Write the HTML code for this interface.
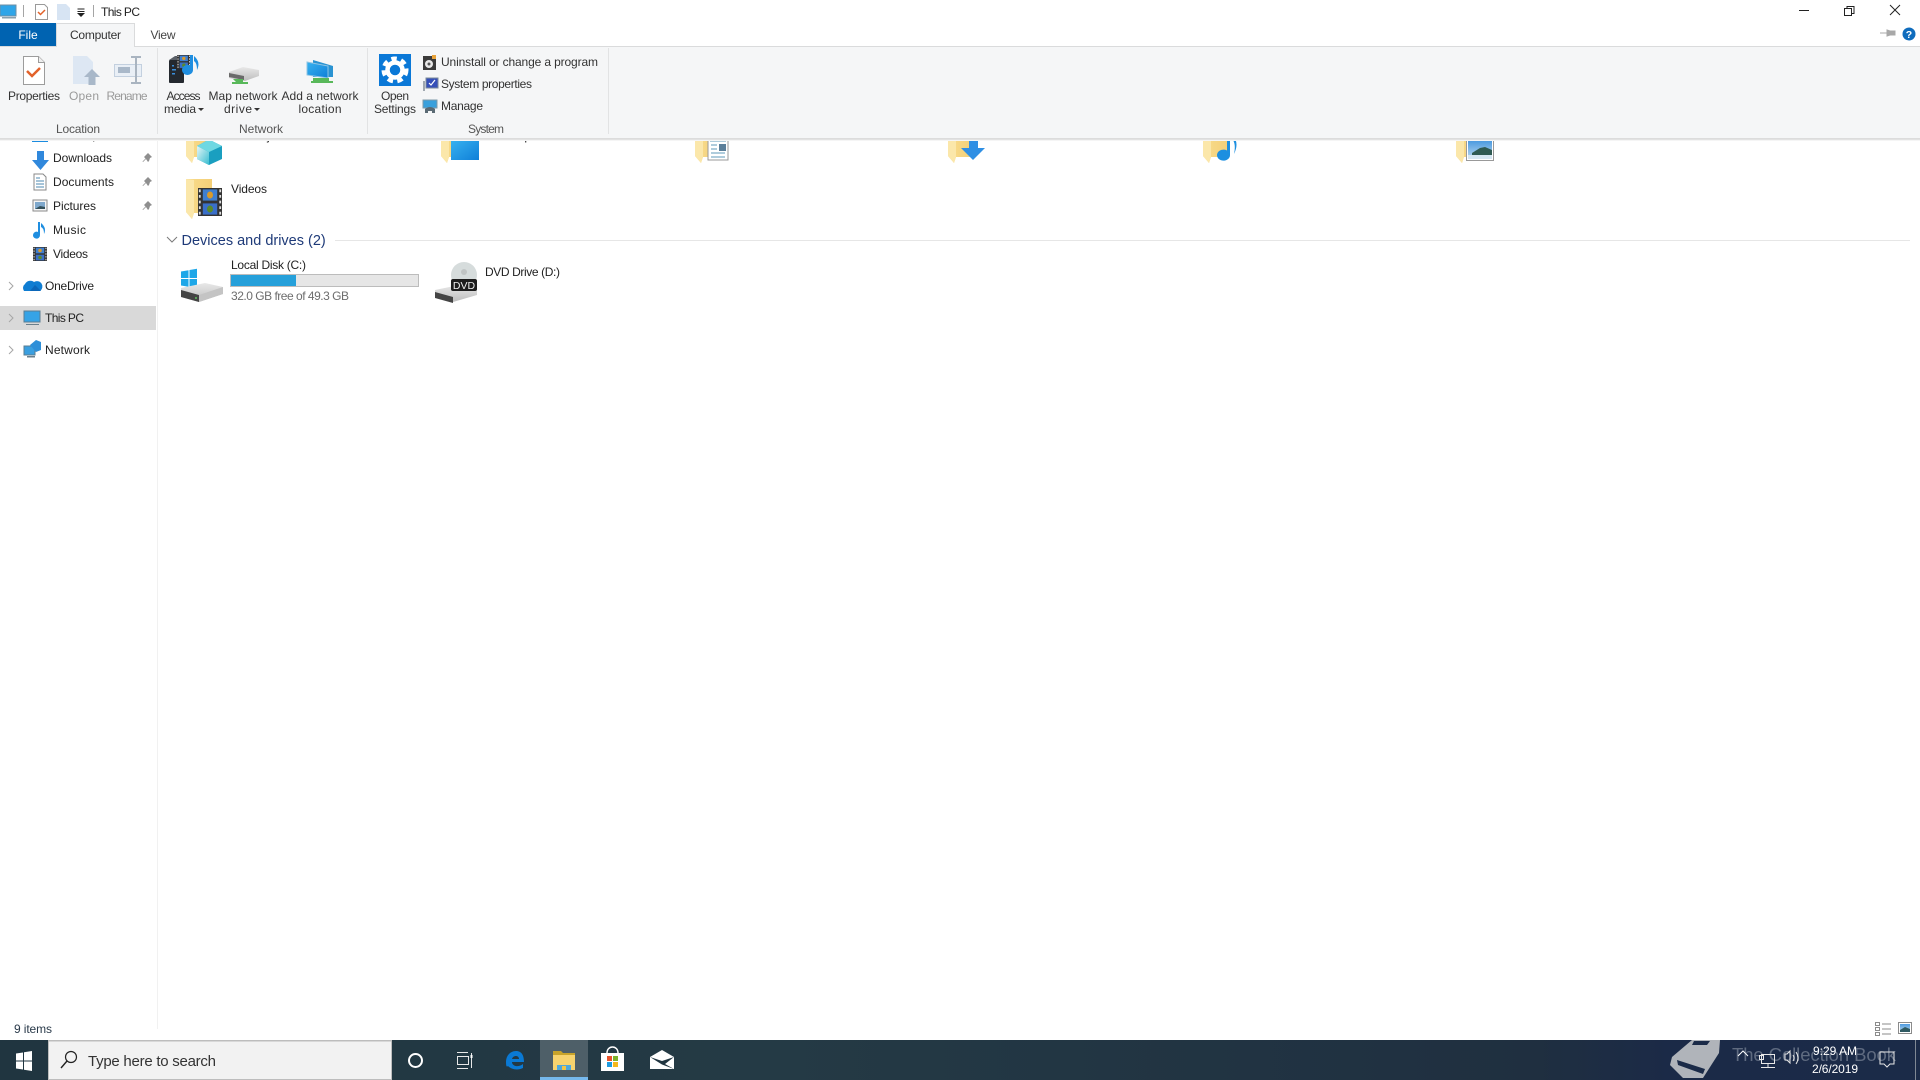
<!DOCTYPE html>
<html><head><meta charset="utf-8"><title>This PC</title>
<style>
html,body{margin:0;padding:0;background:#fff;width:1920px;height:1080px;overflow:hidden}
svg{display:block;position:absolute;left:0;top:0}
text{font-family:"Liberation Sans",sans-serif;font-size:12px;fill:#222}
.g{fill:#9a9a9a}.l{fill:#555}.m{text-anchor:middle}
</style></head><body>
<svg width="1920" height="1080" viewBox="0 0 1920 1080">
<defs>
<linearGradient id="tb" x1="0" x2="1" y1="0" y2="0">
<stop offset="0" stop-color="#203540"/><stop offset=".4" stop-color="#243a45"/><stop offset=".8" stop-color="#1f2f40"/><stop offset=".87" stop-color="#1b2a47"/><stop offset="1" stop-color="#1b2b48"/></linearGradient>
<linearGradient id="sh" x1="0" x2="0" y1="0" y2="1"><stop offset="0" stop-color="#d8d8d8"/><stop offset="1" stop-color="#fff"/></linearGradient>
<linearGradient id="fo" x1="0" x2="1" y1="0" y2="0"><stop offset="0" stop-color="#f9dc8c"/><stop offset="1" stop-color="#f3cf78"/></linearGradient>
<linearGradient id="cube" x1="0" x2="1" y1="0" y2="1"><stop offset="0" stop-color="#e6f6f7"/><stop offset="1" stop-color="#38bdd0"/></linearGradient>
<linearGradient id="hdd" x1="0" x2="0" y1="0" y2="1"><stop offset="0" stop-color="#e8e8e8"/><stop offset="1" stop-color="#bdbdbd"/></linearGradient>
<linearGradient id="scr" x1="0" x2="1" y1="0" y2="1"><stop offset="0" stop-color="#37b2f0"/><stop offset="1" stop-color="#0f7fd8"/></linearGradient>
<linearGradient id="sky" x1="0" x2="0" y1="0" y2="1"><stop offset="0" stop-color="#4d9be0"/><stop offset="1" stop-color="#bcd9ee"/></linearGradient>
<clipPath id="below"><rect x="0" y="139" width="1920" height="900"/></clipPath>
<g id="folder"><path d="M0 0H26V34H8L6 40 0 33Z" fill="url(#fo)"/><path d="M8 1V34L6 40 0 33V0Z" fill="#fbe7aa"/></g>
<g id="film"><rect width="20" height="20" fill="#333"/><rect x="4" y="1" width="12" height="8" fill="#3f7fd0"/><rect x="4" y="11" width="12" height="8" fill="#3a6fc8"/><circle cx="10" cy="5" r="2.500" fill="#d99a2a"/><circle cx="10" cy="15" r="2.500" fill="#5b8a2a"/><path d="M1.500 1v18M18.500 1v18" stroke="#ddd" stroke-dasharray="2 2" stroke-width="1.500"/></g>
</defs>

<!-- page -->
<rect width="1920" height="1080" fill="#fff"/>
<rect x="157" y="139" width="1" height="890" fill="#f1f1f1"/>

<!-- clipped content behind ribbon -->
<g clip-path="url(#below)">
<text x="53" y="139" textLength="46">Desktop</text>
<text x="231" y="140" textLength="62">3D Objects</text>
<text x="485" y="140" textLength="46">Desktop</text>
<rect x="32" y="134" width="16" height="8" fill="#1b8ce0"/>

<!-- row 1 folders -->
<use href="#folder" x="186" y="123"/>
<path d="M209 139.500 222 146V159L209 165 197 159V146Z" fill="#1a9fc0"/>
<path d="M197 146 209 139.500 222 146 209 152Z" fill="#6fd8e2"/><path d="M197 146 209 152V165L197 159Z" fill="url(#cube)"/>
<use href="#folder" x="441" y="123"/><rect x="451" y="140" width="28" height="20" fill="url(#scr)"/>
<use href="#folder" x="695" y="123"/><rect x="708" y="138" width="20" height="22" fill="#fff" stroke="#999"/><path d="M710 141h16M711 145h6M711 149h6M711 153h14M711 157h14" stroke="#5f9ab8"/><rect x="719" y="144" width="7" height="7" fill="#5b7f9a"/>
<use href="#folder" x="948" y="123"/><path d="M969 138h9v10h7l-12 12-12-12h8z" fill="#2f8fe4"/>
<use href="#folder" x="1203" y="123"/><path d="M1230 138v17a6.500 5.500 0 1 1-3-4.500V138z" fill="#1c8fe0"/><path d="M1234 137q5 7 0 17q2-9-1-14z" fill="#1c8fe0"/>
<use href="#folder" x="1456" y="123"/><rect x="1466.500" y="139.500" width="27" height="21" fill="#fff" stroke="#999"/><rect x="1468" y="141" width="24" height="18" fill="url(#sky)"/><path d="M1472 153l8-5 5-1 7 3v6h-20z" fill="#2f5a52"/><rect x="1468" y="155" width="24" height="4" fill="#d5e6f2"/>
</g>
<!-- Videos folder -->
<use href="#folder" x="186" y="179"/>
<use href="#film" transform="translate(198,188) scale(1.2,1.4)"/>
<text x="231" y="193" textLength="36">Videos</text>

<!-- nav -->
<path d="M37 151h7v9h5l-8.500 10-8.500-10h5z" fill="#3088dc"/>
<text x="53" y="162" textLength="59">Downloads</text>
<path d="M34 174h9l3 3v13H34z" fill="#fff" stroke="#888"/><path d="M36 178h4M36 181h8M36 184h8M36 187h8" stroke="#4d88b0"/>
<text x="53" y="186" textLength="61">Documents</text>
<rect x="33" y="200" width="14" height="11" fill="#f5f5f5" stroke="#8a8a8a"/><rect x="35" y="202" width="10" height="7" fill="#7fa8cc"/><path d="M35 209l5-3 5 1v2z" fill="#34505a"/>
<text x="53" y="210" textLength="43">Pictures</text>
<path d="M40 222v13a3.500 3.500 0 1 1-2-3v-10zM41 223q6 5 3 11q0-6-3-7z" fill="#1f8ee0"/>
<text x="53" y="234" textLength="33">Music</text>
<use href="#film" transform="translate(33,247) scale(.7)"/>
<text x="53" y="258" textLength="35">Videos</text>
<g fill="#8f8f8f"><path d="M144 158l4-4 4 4-2 1-1 3-1 1-2-3-3 3-.5-.5 3-3z" transform="translate(0,-1)"/><path d="M144 182l4-4 4 4-2 1-1 3-1 1-2-3-3 3-.5-.5 3-3z" transform="translate(0,-1)"/><path d="M144 206l4-4 4 4-2 1-1 3-1 1-2-3-3 3-.5-.5 3-3z" transform="translate(0,-1)"/></g>

<rect x="0" y="306" width="156" height="24" fill="#d9d9d9"/>
<g fill="none" stroke="#a6a6a6"><path d="M9 282l4 4-4 4M9 314l4 4-4 4M9 346l4 4-4 4"/></g>
<path d="M24 291a5 5 0 0 1 1-7 6 6 0 0 1 9-2 5 5 0 0 1 6 9z" fill="#0f7dd2"/><path d="M30 291l5-6 6 6z" fill="#0b66b8"/>
<text x="45" y="290" textLength="49">OneDrive</text>
<rect x="24" y="311" width="16" height="11" fill="#35a3e6" stroke="#5a7d92"/><rect x="26" y="324" width="13" height="1" fill="#6a7f8c"/>
<text x="45" y="322" textLength="39">This PC</text>
<rect x="24" y="346" width="11" height="9" fill="#3a9fe0" stroke="#5a7d92"/><path d="M30 345l6-5 5 2v8l-5 2z" fill="#2e8fd8"/><rect x="27" y="356" width="8" height="1.500" fill="#6a7f8c"/>
<text x="45" y="354" textLength="45">Network</text>

<!-- devices and drives -->
<path d="M167 237l5 5 5-5" fill="none" stroke="#7a7a7a"/>
<text x="181.500" y="245" style="font-size:14.500px;fill:#1e3a78">Devices and drives (2)</text>
<rect x="335" y="240" width="1575" height="1" fill="#e6e6e6"/>

<!-- C: -->
<g fill="#1ea7e8"><path d="M181 271.500l7.500-1.300v7.800h-7.500zM189.500 270l7.500-1.300v9.300h-7.500zM181 279h7.500v7.800l-7.500-1.300zM189.500 279h7.500v9l-7.500-1.300z"/></g>
<path d="M181 288l24-5 18 4v7l-24 8-18-5z" fill="url(#hdd)"/><path d="M181 290l18 5v7l-18-5z" fill="#444"/><path d="M199 295l24-8v7l-24 8z" fill="#c4c4c4"/><circle cx="196" cy="298" r="1" fill="#5fc15f"/>
<text x="231" y="269" textLength="75">Local Disk (C:)</text>
<rect x="230.500" y="274.500" width="188" height="12" fill="#e6e6e6" stroke="#bcbcbc"/>
<rect x="231" y="275" width="65" height="11" fill="#26a0da"/>
<text x="231" y="300" style="fill:#6d6d6d" textLength="118">32.0 GB free of 49.3 GB</text>

<!-- D: -->
<circle cx="464" cy="275" r="13" fill="#d6dcdc"/><circle cx="464" cy="272" r="3" fill="#c0c4c4"/>
<path d="M435 290l24-5 18 4v6l-24 7-18-5z" fill="url(#hdd)"/><path d="M435 292l18 5v6l-18-5z" fill="#444"/>
<rect x="451" y="279" width="26" height="12" rx="2" fill="#1d1d1d"/>
<text x="464" y="289" class="m" style="font-size:10.500px;fill:#eee">DVD</text>
<text x="485" y="276" textLength="75">DVD Drive (D:)</text>

<!-- titlebar -->
<rect x="0" y="5" width="16" height="11" fill="#2fa5e8" stroke="#6d8ea3"/><rect x="2" y="17" width="14" height="1.500" fill="#8aa0ae"/>
<rect x="23" y="5" width="1" height="12" fill="#a5a5a5"/>
<path d="M35.500 4.500h9l3 3v12h-12z" fill="#fff" stroke="#9a9a9a"/><path d="M38 12l2.500 2.500 4.500-4.500" fill="none" stroke="#e2622a" stroke-width="1.500"/>
<path d="M57 4h9l4 4v12H57z" fill="#d7e4f3"/>
<path d="M77.500 9h7M77.500 11.500h7" stroke="#222" stroke-width="1"/><path d="M77 13h8l-4 4z" fill="#222"/>
<rect x="93" y="5" width="1" height="12" fill="#a5a5a5"/>
<text x="101" y="16" textLength="39">This PC</text>
<rect x="1799" y="10" width="10" height="1" fill="#222"/>
<g fill="none" stroke="#222"><rect x="1844.500" y="8.500" width="7" height="7"/><path d="M1847 8.500V6.500h7v7h-2"/><path d="M1890 5l10 10M1900 5l-10 10"/></g>

<!-- tabs & ribbon -->
<rect x="0" y="46" width="1920" height="92" fill="#f5f6f7"/>
<rect x="0" y="46" width="1920" height="1" fill="#dadbdc"/>
<rect x="0" y="138" width="1920" height="1" fill="#dcdcdc"/>
<rect x="0" y="139" width="1920" height="2" fill="url(#sh)"/>
<rect x="0" y="23" width="56" height="23" fill="#0063b1"/>
<text x="28" y="39" class="m" style="fill:#fff">File</text>
<path d="M56.500 47V23.500h78V47" fill="#f5f6f7" stroke="#dadbdc"/>
<rect x="57" y="45" width="77" height="3" fill="#f5f6f7"/>
<text x="95.500" y="39" class="m" style="fill:#333" textLength="51">Computer</text>
<text x="163" y="39" class="m" style="fill:#444" textLength="25">View</text>
<path d="M1880 33h7M1887 30v6l3-1h5v-4h-5z" fill="#a8a8a8" stroke="#a8a8a8"/>
<circle cx="1909" cy="34" r="6.500" fill="#0f6cbd"/><text x="1909" y="38" class="m" style="font-size:10.500px;font-weight:bold;fill:#fff">?</text>

<g fill="#e2e3e4"><rect x="157" y="48" width="1" height="86"/><rect x="367" y="48" width="1" height="86"/><rect x="608" y="48" width="1" height="86"/></g>

<!-- properties -->
<path d="M23.500 56.500h15l6 6v22h-21z" fill="#fff" stroke="#9c9c9c"/><path d="M38.500 56.500v6h6" fill="#eee" stroke="#9c9c9c"/>
<path d="M27 71l5 5 8-8" fill="none" stroke="#e2622a" stroke-width="2.500"/>
<text x="34" y="100" class="m" style="fill:#333" textLength="52">Properties</text>
<!-- open -->
<path d="M73 56h14l6 6v22H73z" fill="#dde7f3"/><path d="M92 69l8 8h-4.500v8h-7v-8H84z" fill="#a9b8c9"/>
<text x="84" y="100" class="m g" textLength="30">Open</text>
<!-- rename -->
<rect x="114.500" y="64.500" width="27" height="12" fill="#e9eff6" stroke="#c3d0df"/><rect x="118" y="67" width="12" height="6" fill="#a9b8c9"/>
<path d="M131 57h10M136 57v26M131 83h10" stroke="#a9b4c0" stroke-width="2" fill="none"/>
<text x="127" y="100" class="m g" textLength="41">Rename</text>
<!-- access media -->
<rect x="169" y="60" width="15" height="23" rx="1" fill="#24292f"/><path d="M169 60l6-4h9v4z" fill="#5a6068"/><g fill="#3a8fdc"><rect x="172" y="65" width="2" height="1.500"/><rect x="172" y="69" width="4" height="1.500"/><rect x="172" y="73" width="3" height="1.500"/></g>
<use href="#film" transform="translate(177,55) scale(.68)"/>
<path d="M193 55v15a5.500 5 0 1 1-3-4.500V55zM194 56q7 6 3 14q0-7-3-9z" fill="#1f8ee0"/>
<text x="183.500" y="100" class="m" style="fill:#333" textLength="34">Access</text>
<text x="180" y="113" class="m" style="fill:#333" textLength="32">media</text>
<path d="M198 108h6l-3 3z" fill="#333"/>
<!-- map -->
<path d="M229 72l14-5 16 3v6l-14 5-16-3z" fill="url(#hdd)"/><path d="M229 73l15 3v4l-15-3z" fill="#6a6a6a"/><path d="M233 79h10v3h5v2h-16v-2h4z" fill="#58b85a"/>
<text x="243" y="100" class="m" style="fill:#333" textLength="69">Map network</text>
<text x="238" y="113" class="m" style="fill:#333" textLength="28">drive</text>
<path d="M254 108h6l-3 3z" fill="#333"/>
<!-- add net -->
<path d="M313 60l20 6v11h-20z" fill="#2a93d2"/><path d="M307 62l21 4v12l-21-3z" fill="url(#scr)" stroke="#8fc5e4"/><path d="M313 78h16v3h4v2h-22v-2h2z" fill="#58b85a"/>
<text x="320" y="100" class="m" style="fill:#333" textLength="77">Add a network</text>
<text x="320" y="113" class="m" style="fill:#333" textLength="43">location</text>
<!-- settings -->
<rect x="379" y="54" width="32" height="32" fill="#0a78d7"/>
<circle cx="395" cy="70" r="7.500" fill="none" stroke="#fff" stroke-width="4.500"/>
<circle cx="395" cy="70" r="11.500" fill="none" stroke="#fff" stroke-width="4" stroke-dasharray="5.500 4.530"/>
<text x="395" y="100" class="m" style="fill:#333" textLength="28">Open</text>
<text x="395" y="113" class="m" style="fill:#333" textLength="42">Settings</text>
<!-- sys list -->
<rect x="423" y="56" width="13" height="14" fill="#3a3a3a"/><circle cx="429" cy="64" r="4" fill="#e8e8e8"/><circle cx="429" cy="64" r="1.500" fill="#555"/><rect x="432" y="55" width="4" height="4" fill="#e8a33a"/>
<text x="441" y="66" style="fill:#333" textLength="157">Uninstall or change a program</text>
<rect x="426" y="78" width="12" height="10" fill="#3650b8" stroke="#7a8a9a"/><path d="M429 83l2 2 4-5" fill="none" stroke="#fff" stroke-width="1.200"/><rect x="423" y="81" width="2" height="10" fill="#a0a8b0"/>
<text x="441" y="88" style="fill:#333" textLength="91">System properties</text>
<rect x="423" y="100" width="14" height="8" fill="#3aa0dc" stroke="#7f9aaa"/><path d="M425 113v-4q5-4 10 0v4h-3v-2h-4v2z" fill="#5a6a74"/>
<text x="441" y="110" style="fill:#333" textLength="42">Manage</text>
<g class="l"><text x="78" y="133" class="m l" textLength="44">Location</text><text x="261" y="133" class="m l" textLength="44">Network</text><text x="486" y="133" class="m l" textLength="36">System</text></g>

<!-- status bar -->
<text x="14" y="1033" style="fill:#2a3a4a" textLength="38">9 items</text>
<g fill="none" stroke="#8b8b8b"><rect x="1875.500" y="1022.500" width="4" height="3"/><rect x="1875.500" y="1027.500" width="4" height="3"/><rect x="1875.500" y="1032.500" width="4" height="3"/><path d="M1882 1024h9M1882 1029h9M1882 1034h9"/><rect x="1898.500" y="1022.500" width="13" height="11" fill="#fff"/></g>
<rect x="1900" y="1024" width="10" height="8" fill="url(#sky)"/><path d="M1900 1030l5-3 5 2v3h-10z" fill="#2f5a62"/>

<!-- taskbar -->
<rect x="0" y="1040" width="1920" height="40" fill="url(#tb)"/>
<g fill="#fff"><path d="M16 1053.500l7-1v8h-7zM24 1052.300l8-1.300v9.500h-8zM16 1061.500h7v8l-7-1zM24 1061.500h8V1071l-8-1.200z"/></g>
<rect x="48" y="1040" width="344" height="40" fill="#f2f2f2"/><rect x="48" y="1040" width="344" height="1.500" fill="#bdbdbd"/><rect x="48" y="1040" width="1" height="40" fill="#bdbdbd"/><rect x="391" y="1040" width="1" height="40" fill="#bdbdbd"/><rect x="48" y="1079" width="344" height="1" fill="#bdbdbd"/>
<circle cx="71" cy="1057" r="5.500" fill="none" stroke="#222" stroke-width="1.200"/><path d="M67 1061l-6 7" stroke="#222" stroke-width="1.400"/>
<text x="88" y="1066" style="font-size:15px;fill:#333" textLength="128">Type here to search</text>
<circle cx="415.500" cy="1060.500" r="6.500" fill="none" stroke="#fff" stroke-width="2"/>
<g fill="none" stroke="#e8e8e8"><rect x="457.500" y="1056.500" width="11" height="8"/><path d="M457 1052.500h11M457 1068.500h11M471.500 1053v15"/><path d="M471.500 1055v3" stroke="#fff" stroke-width="2"/></g>
<path d="M506 1062c0-7 5-11 10-11 6 0 8 5 8 11h-12c0 4 6 6 11 2v4c-6 3-12 1-15-2-1 1-2 1-2-4zm6-3h7c0-4-6-4-7 0z" fill="#0a79d4" fill-rule="evenodd"/>
<rect x="540" y="1040" width="48" height="40" fill="#4e5f68"/><rect x="540" y="1077" width="48" height="3" fill="#76b9ed"/>
<path d="M553 1051h8l2 2h12v4h-22z" fill="#c8a32a"/><rect x="553" y="1055" width="22" height="15" fill="#f7d36e"/><path d="M557 1070v-5h14v5z" fill="#4fa8dc"/><rect x="562" y="1066" width="4" height="4" fill="#f2c544"/>
<path d="M601 1053h23v18h-23z" fill="#fff"/><path d="M607 1053c0-8 11-8 11 0" fill="none" stroke="#fff" stroke-width="1.500"/>
<rect x="607" y="1056" width="5" height="5" fill="#e8532b"/><rect x="613" y="1056" width="5" height="5" fill="#7db32c"/><rect x="607" y="1062" width="5" height="5" fill="#1e9be0"/><rect x="613" y="1062" width="5" height="5" fill="#f5b81c"/>
<path d="M650 1057l12-7 12 7v12h-24z" fill="#fff"/><path d="M650 1057l12 4 12-4-9 7 9 5-12-4.500z" fill="#203540" transform="translate(0,0)"/>

<!-- tray + watermark -->
<path d="M1692 1040h28l-1 13-16 25h-20l-13-13 2-8z" fill="#b0b4ba"/>
<path d="M1694 1041h16l-3 4h-15zM1677 1060l28 9-2 5-25-9z" fill="#1b2b48"/>
<text x="1732" y="1061" style="font-size:18.500px;fill:#5f6b80" textLength="164">The Collection Book</text>
<path d="M1738 1056l5-5 5 5" fill="none" stroke="#fff"/>
<g fill="none" stroke="#e8e8e8"><rect x="1761.500" y="1054.500" width="13" height="9"/><rect x="1759.500" y="1055.500" width="4" height="4"/><path d="M1768 1064v4M1761 1067.500h14"/><path d="M1785 1054h2l3-3v12l-3-3h-2zM1793 1055q2 3 0 6M1796 1052q4 6 0 12"/><path d="M1880 1052h14v12h-4l-3 3-3-3h-4z"/></g>
<rect x="1915" y="1040" width="1" height="40" fill="#7f8894"/>
<text x="1835" y="1055" class="m" style="font-size:12px;fill:#fff" textLength="44">9:29 AM</text>
<text x="1835" y="1073" class="m" style="font-size:12px;fill:#fff" textLength="46">2/6/2019</text>
</svg>
</body></html>
